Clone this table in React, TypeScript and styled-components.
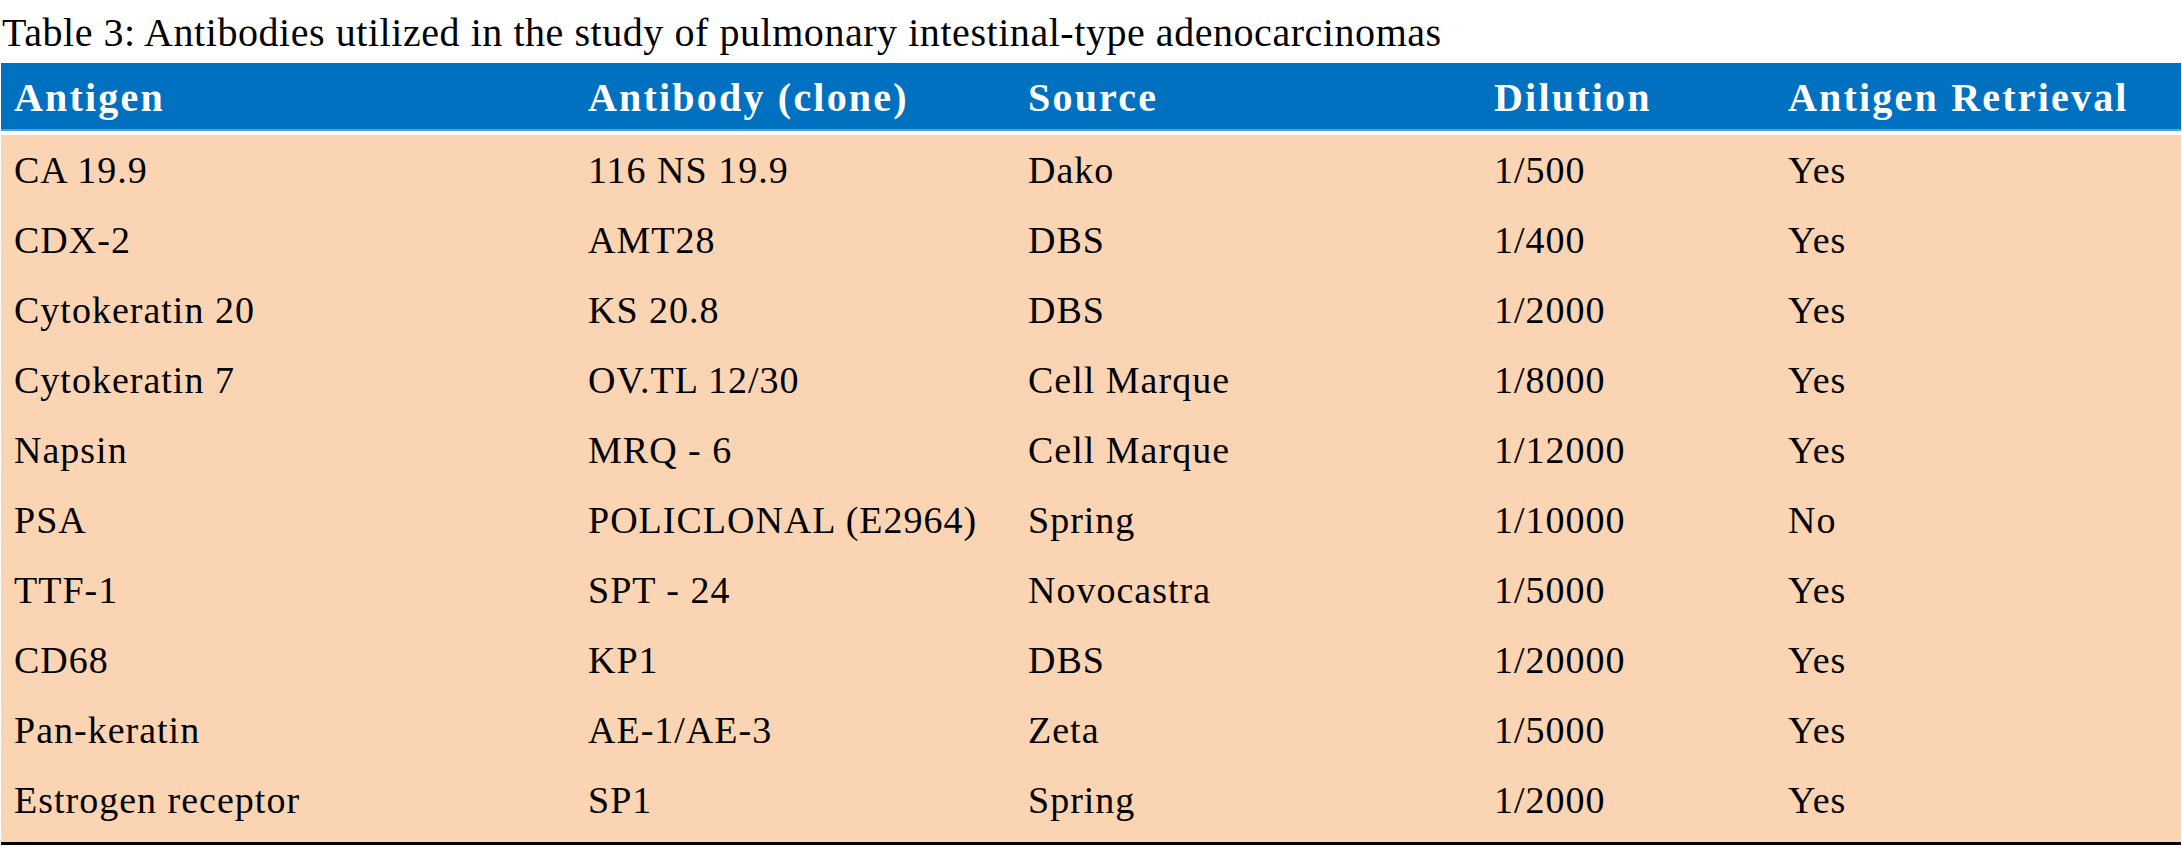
import {FC} from 'react';
import styled, {createGlobalStyle} from 'styled-components';

const GlobalStyle = createGlobalStyle`
  html, body {
    margin: 0;
    padding: 0;
    background: #ffffff;
  }
`;

const Page = styled.div`
  padding: 0 1px;

  font-family: 'Liberation Serif', 'DejaVu Serif', serif;
  color: #000000;
`;

const Caption = styled.div`
  height: 60px;
  padding-top: 3px;
  padding-left: 1px;

  font-size: 40px;
  letter-spacing: 0.55px;
  line-height: 60px;
  white-space: nowrap;
`;

const Table = styled.table`
  width: 2180px;

  border-collapse: separate;
  border-spacing: 0;
  table-layout: fixed;
`;

const HeadCell = styled.th<{$width: number}>`
  width: ${({$width}) => $width}px;
  height: 68px;
  padding: 2px 0 0 13px;

  box-sizing: border-box;

  font-size: 40px;
  font-weight: 700;
  letter-spacing: 2.2px;
  text-align: left;
  white-space: nowrap;

  color: #ffffff;
  background: #0070c0;
  border-bottom: 2px solid #4fa1dc;
`;

const Row = styled.tr`
  td {
    height: 70px;
  }

  &:first-child td {
    height: 74px;
    border-top: 4px solid #ffffff;
  }

  &:last-child td {
    height: 80px;
    padding-bottom: 7px;
    border-bottom: 3px solid #000000;
  }
`;

const Cell = styled.td`
  padding: 0 0 0 13px;

  box-sizing: border-box;

  font-size: 38px;
  letter-spacing: 1px;
  white-space: nowrap;
  vertical-align: middle;

  background: #fbd4b4;
`;

const columns = [
  {label: 'Antigen', width: 574},
  {label: 'Antibody (clone)', width: 440},
  {label: 'Source', width: 466},
  {label: 'Dilution', width: 294},
  {label: 'Antigen Retrieval', width: 406},
];

const rows = [
  ['CA 19.9', '116 NS 19.9', 'Dako', '1/500', 'Yes'],
  ['CDX-2', 'AMT28', 'DBS', '1/400', 'Yes'],
  ['Cytokeratin 20', 'KS 20.8', 'DBS', '1/2000', 'Yes'],
  ['Cytokeratin 7', 'OV.TL 12/30', 'Cell Marque', '1/8000', 'Yes'],
  ['Napsin', 'MRQ - 6', 'Cell Marque', '1/12000', 'Yes'],
  ['PSA', 'POLICLONAL (E2964)', 'Spring', '1/10000', 'No'],
  ['TTF-1', 'SPT - 24', 'Novocastra', '1/5000', 'Yes'],
  ['CD68', 'KP1', 'DBS', '1/20000', 'Yes'],
  ['Pan-keratin', 'AE-1/AE-3', 'Zeta', '1/5000', 'Yes'],
  ['Estrogen receptor', 'SP1', 'Spring', '1/2000', 'Yes'],
];

const App: FC = () => (
  <Page>
    <GlobalStyle />
    <Caption>Table 3: Antibodies utilized in the study of pulmonary intestinal-type adenocarcinomas</Caption>
    <Table>
      <thead>
        <tr>
          {columns.map(col => (
            <HeadCell key={col.label} $width={col.width}>
              {col.label}
            </HeadCell>
          ))}
        </tr>
      </thead>
      <tbody>
        {rows.map(row => (
          <Row key={row[0]}>
            {row.map((value, i) => (
              <Cell key={i}>{value}</Cell>
            ))}
          </Row>
        ))}
      </tbody>
    </Table>
  </Page>
);

export default App;
